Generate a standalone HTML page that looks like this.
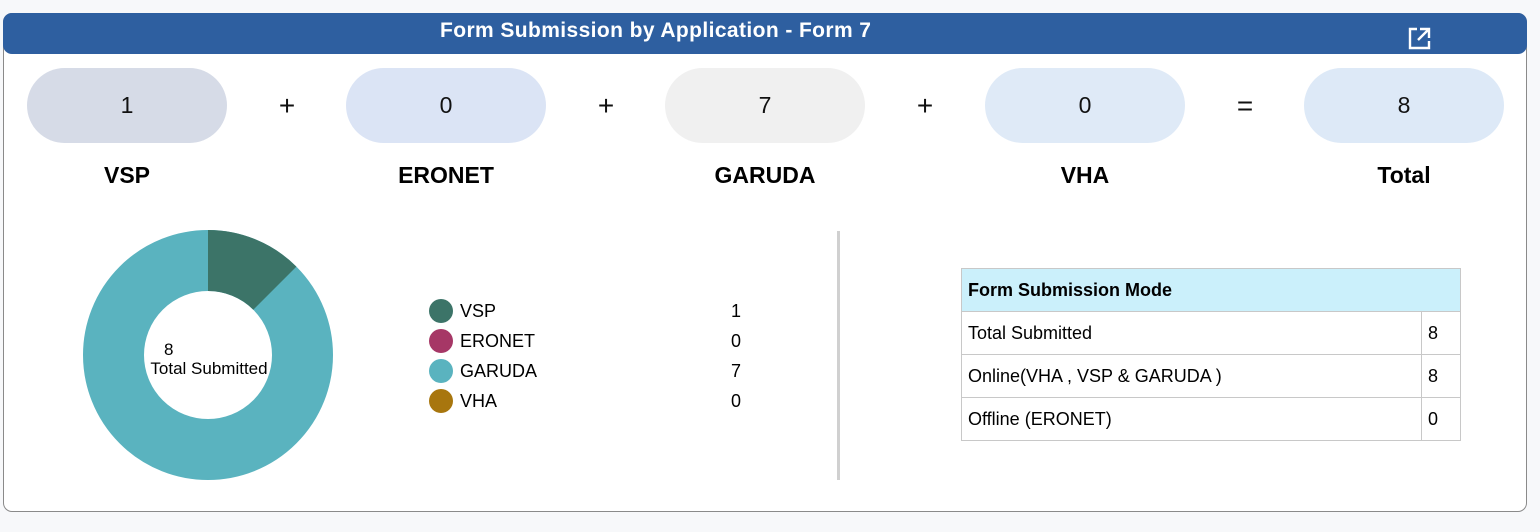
<!DOCTYPE html>
<html><head><style>
body{margin:0;width:1540px;height:532px;background:#f7f8fa;font-family:"Liberation Sans",sans-serif;position:relative;overflow:hidden}
.card{position:absolute;left:3px;top:13px;width:1522px;height:497px;background:#fff;border:1px solid #8a8a8a;border-radius:9px;}
.hdr{position:absolute;left:3px;top:13px;width:1524px;height:41px;background:#2e5fa0;border-radius:9px;color:#fff;font-weight:bold;font-size:21px;line-height:36px;}
.hdr span{position:absolute;left:437px;top:0;letter-spacing:0.4px}
.pill{position:absolute;top:68px;width:200px;height:75px;border-radius:38px;text-align:center;line-height:75px;font-size:23px;color:#111}
.op{position:absolute;top:68px;line-height:75px;font-size:28px;width:40px;text-align:center;color:#111}
.lab{position:absolute;top:162px;width:200px;text-align:center;font-weight:bold;font-size:23px;color:#000}
.leg{position:absolute;left:429px;width:320px;height:30px;font-size:18px;line-height:30px}
.leg i{position:absolute;left:0;top:3px;width:24px;height:24px;border-radius:50%}
.leg b{font-weight:normal;position:absolute;left:31px}
.leg em{font-style:normal;position:absolute;right:8px}
table{position:absolute;left:961px;top:268px;width:500px;border-collapse:collapse;font-size:18px}
td{border:1px solid #c8c8c8;height:42px;padding:0 6px;}
</style></head><body>
<div class="card"></div>
<div class="hdr"><span>Form Submission by Application - Form 7</span>
<svg style="position:absolute;left:1404px;top:14px" width="24" height="24" viewBox="0 0 24 24" fill="none" stroke="#fff" stroke-width="2.4"><path d="M10 2H3v19h19v-7"/><path d="M13 2h9v9M22 2L11 13"/></svg></div>
<div class="pill" style="left:27px;background:#d6dbe7">1</div>
<div class="op" style="left:267px">+</div>
<div class="pill" style="left:346px;background:#dbe4f5">0</div>
<div class="op" style="left:586px">+</div>
<div class="pill" style="left:665px;background:#f0f0f0">7</div>
<div class="op" style="left:905px">+</div>
<div class="pill" style="left:985px;background:#dfeaf7">0</div>
<div class="op" style="left:1225px">=</div>
<div class="pill" style="left:1304px;background:#dde9f7">8</div>
<div class="lab" style="left:27px">VSP</div>
<div class="lab" style="left:346px">ERONET</div>
<div class="lab" style="left:665px">GARUDA</div>
<div class="lab" style="left:985px">VHA</div>
<div class="lab" style="left:1304px">Total</div>
<svg style="position:absolute;left:0;top:0" width="420" height="532">
<circle cx="208" cy="355" r="94.5" fill="none" stroke="#5ab3bf" stroke-width="61"/>
<path d="M208 230A125 125 0 0 1 296.4 266.6L253.3 309.7A64 64 0 0 0 208 291Z" fill="#3c7468"/>
<text x="164" y="355" font-size="17" font-family="Liberation Sans">8</text>
<text x="209" y="374" font-size="17" text-anchor="middle" font-family="Liberation Sans">Total Submitted</text>
</svg>
<div class="leg" style="top:296px"><i style="background:#3c7468"></i><b>VSP</b><em>1</em></div>
<div class="leg" style="top:326px"><i style="background:#a63766"></i><b>ERONET</b><em>0</em></div>
<div class="leg" style="top:356px"><i style="background:#5ab3bf"></i><b>GARUDA</b><em>7</em></div>
<div class="leg" style="top:386px"><i style="background:#a8760e"></i><b>VHA</b><em>0</em></div>
<div style="position:absolute;left:837px;top:231px;width:3px;height:249px;background:#d0d0d0"></div>
<table>
<tr><td colspan="2" style="background:#cbf0fb;font-weight:bold">Form Submission Mode</td></tr>
<tr><td>Total Submitted</td><td style="width:26px">8</td></tr>
<tr><td>Online(VHA , VSP &amp; GARUDA )</td><td>8</td></tr>
<tr><td>Offline (ERONET)</td><td>0</td></tr>
</table>
</body></html>
